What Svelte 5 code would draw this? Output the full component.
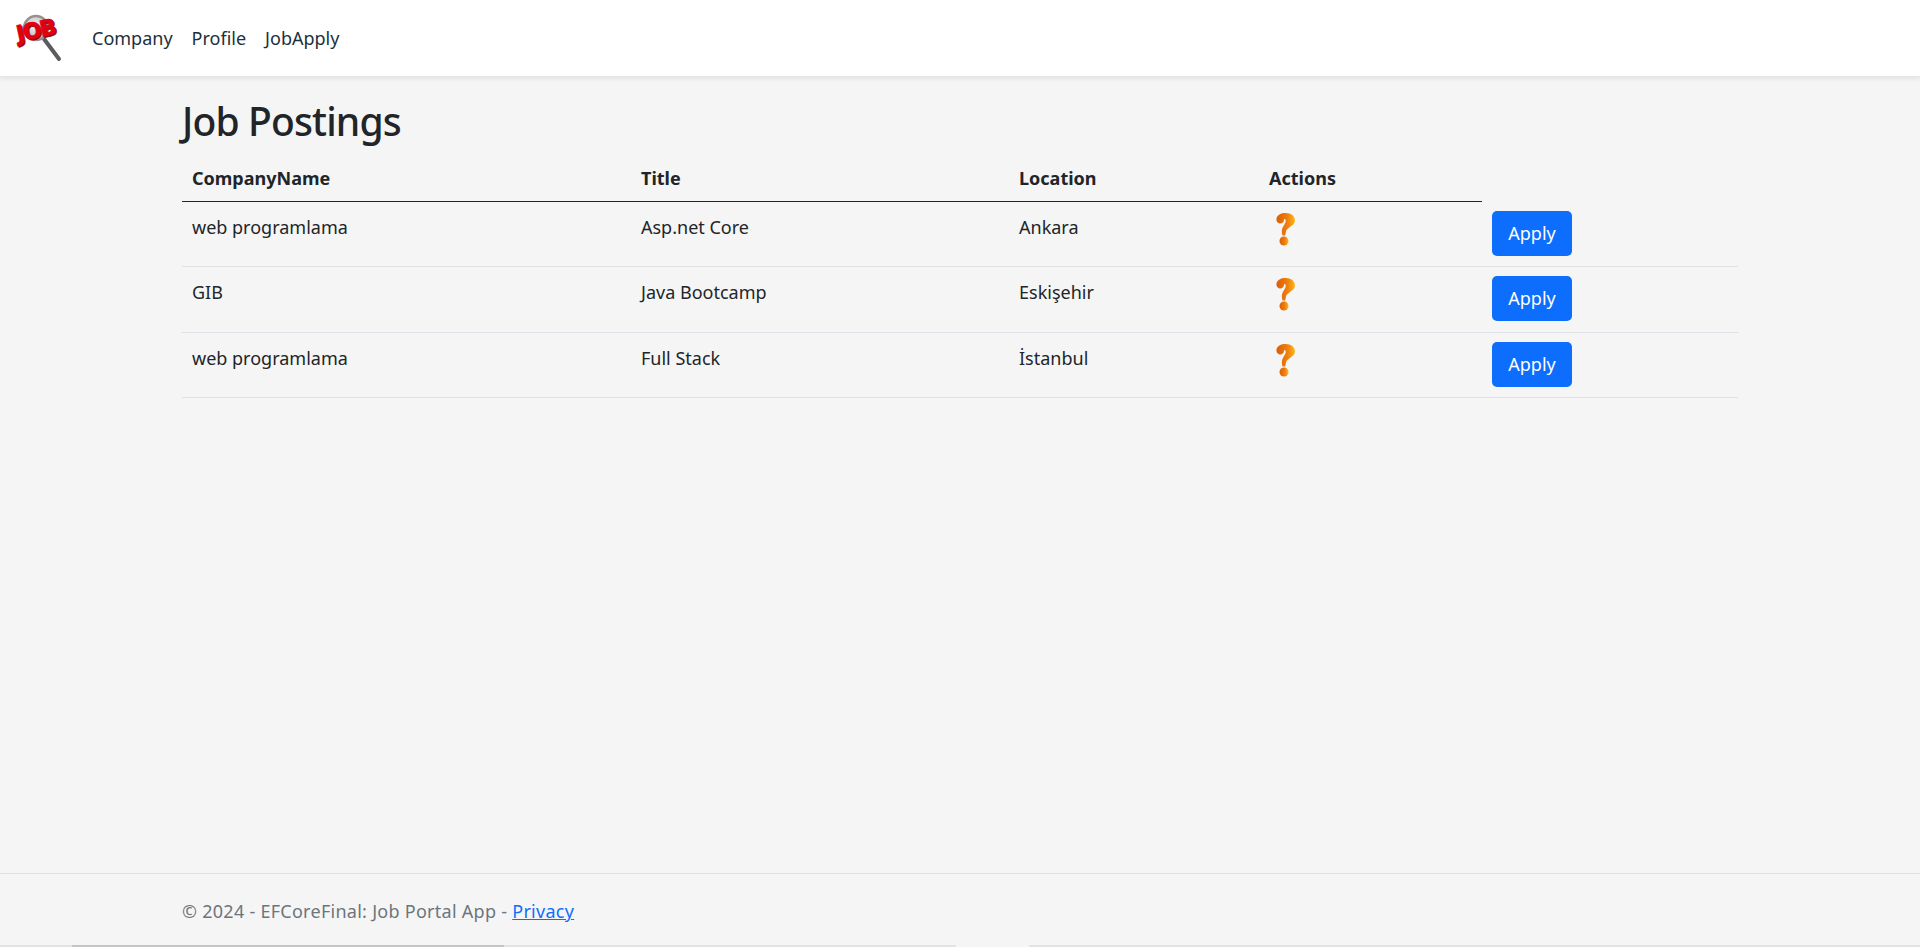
<script>
  const jobs = [
    { company: 'web programlama', title: 'Asp.net Core', location: 'Ankara' },
    { company: 'GIB', title: 'Java Bootcamp', location: 'Eskişehir' },
    { company: 'web programlama', title: 'Full Stack', location: 'İstanbul' }
  ];
</script>

<div class="page">
  <header class="navbar">
    <a class="brand" href="#home" aria-label="Home">
      <svg width="52" height="54" viewBox="0 0 52 54">
        <defs>
          <radialGradient id="lens" cx="45%" cy="40%" r="60%">
            <stop offset="0" stop-color="#f6f6f6" />
            <stop offset="1" stop-color="#b4b4b4" />
          </radialGradient>
        </defs>
        <path d="M31 28 L46 48" stroke="#5c5c5c" stroke-width="4" stroke-linecap="round" />
        <circle cx="23" cy="17" r="12" fill="url(#lens)" stroke="#9a8f8f" stroke-width="2.500" />
        <text class="logo-text shade" x="5" y="28" transform="rotate(-12 24 24)">JOB</text>
        <text class="logo-text" x="4" y="26.500" transform="rotate(-12 24 24)">JOB</text>
      </svg>
    </a>
    <nav class="links">
      <a href="#company">Company</a>
      <a href="#profile">Profile</a>
      <a href="#jobapply">JobApply</a>
    </nav>
  </header>

  <main class="container">
    <h1>Job Postings</h1>
    <table>
      <thead>
        <tr>
          <th class="col-company">CompanyName</th>
          <th class="col-title">Title</th>
          <th class="col-location">Location</th>
          <th class="col-actions">Actions</th>
        </tr>
      </thead>
      <tbody>
        {#each jobs as job}
          <tr>
            <td>{job.company}</td>
            <td>{job.title}</td>
            <td>{job.location}</td>
            <td>
              <svg class="help" width="30" height="38" viewBox="0 0 30 38" aria-hidden="true">
                <defs>
                  <linearGradient id="q" x1="0" y1="0" x2="1" y2="0">
                    <stop offset="0" stop-color="#db5c08" />
                    <stop offset=".6" stop-color="#ef7f0e" />
                    <stop offset="1" stop-color="#fdb918" />
                  </linearGradient>
                </defs>
                <path d="M7.500 9.500 C8 6 12 4 16.500 4 C22 4 26 7 26 11.500 C26 16 20 18 17.500 21 C16.500 23 17 25 16 26.500 L13.500 26.500 C12.500 23 12.500 20 14.500 17 C16 14.500 17.500 12.500 16.500 10.500 C15.500 9.500 15 10 15 11 C15 13.500 12.500 15 10.500 14.500 C8.500 14 7 12 7.500 9.500 Z" fill="url(#q)" />
                <circle cx="15" cy="32" r="4.500" fill="url(#q)" />
              </svg>
            </td>
            <td class="cell-apply"><button type="button">Apply</button></td>
          </tr>
        {/each}
      </tbody>
    </table>
  </main>

  <footer>
    <div class="footer-text">© 2024 - EFCoreFinal: Job Portal App - <a href="#privacy">Privacy</a></div>
  </footer>

  <div class="scrollbar"><span class="thumb"></span><span class="gap"></span></div>
</div>

<style>
  :global(body) {
    margin: 0;
    background: #f5f5f5;
    color: #212529;
    font-family: "Noto Sans", "Open Sans", sans-serif;
    font-size: 18px;
  }

  .page {
    height: 947px;
    display: flex;
    flex-direction: column;
    overflow: hidden;
    position: relative;
  }

  .navbar {
    height: 77px;
    flex: none;
    background: #fff;
    display: flex;
    align-items: center;
    padding-left: 13px;
    box-shadow: 0 2px 5px rgba(0, 0, 0, .08);
    border-bottom: 1px solid #e6e6e6;
    box-sizing: border-box;
  }
  .brand { display: flex; width: 52px; height: 54px; align-self: flex-start; margin-top: 11px; }
  .logo-text {
    font-family: "DejaVu Sans", sans-serif;
    font-weight: 700;
    font-size: 22px;
    fill: #e4000f;
    stroke: #e4000f;
    stroke-width: .6px;
    letter-spacing: -1.5px;
  }
  .logo-text.shade { fill: #8f0008; stroke: #8f0008; }

  .links { display: flex; margin-left: 27px; gap: 19px; }
  .links a { color: #212f3c; text-decoration: none; font-size: 18px; }

  .container { flex: 1; padding: 0 182px; }

  h1 {
    margin: 20px 0 12px;
    font-size: 39px;
    line-height: 48px;
    font-weight: 500;
    letter-spacing: -.85px;
    color: #212529;
  }

  table { width: 1556px; border-collapse: separate; border-spacing: 0; table-layout: fixed; }
  th, td { padding: 12px 10px 0; text-align: left; font-size: 18px; vertical-align: top; }
  th { font-weight: 700; height: 25px; padding-top: 9px; padding-bottom: 10px; border-bottom: 1px solid #212529; }
  td { border-bottom: 1px solid #dee2e6; line-height: 27px; }
  .col-company { width: 429px; }
  .col-title { width: 358px; }
  .col-location { width: 230px; }
  .col-actions { width: 203px; }

  .help { display: block; margin-top: -5px; margin-bottom: -6px; }
  .cell-apply { padding-top: 9px; padding-bottom: 10.33px; }

  button {
    display: block;
    background: #0d6efd;
    color: #fff;
    border: none;
    border-radius: 5px;
    height: 45px;
    width: 80px;
    font: inherit;
    font-size: 18px;
  }

  footer { height: 73px; flex: none; border-top: 1px solid #dee2e6; padding-left: 182px; }
  .footer-text { color: #6c757d; font-size: 18px; line-height: 75px; letter-spacing: .27px; }
  .footer-text a { color: #0d6efd; }

  .scrollbar { position: absolute; left: 0; right: 0; bottom: 0; height: 2px; background: #e3e3e3; }
  .thumb { position: absolute; left: 72px; width: 432px; top: 0; bottom: 0; background: #c4c4c4; }
  .gap { position: absolute; left: 956px; width: 73px; top: 0; bottom: 0; background: #f5f5f5; }
</style>
